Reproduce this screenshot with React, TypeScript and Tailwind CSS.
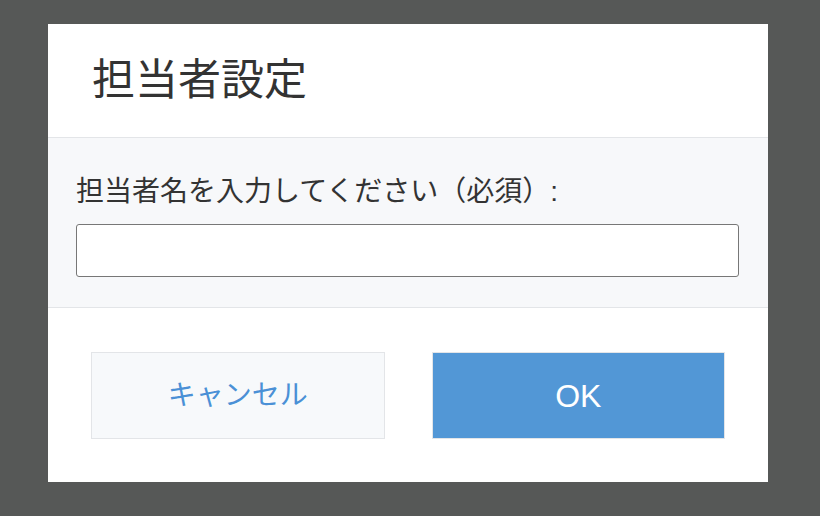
export default function App() {
  const jp = { fontFamily: '"Liberation Sans", "Noto Sans CJK JP", sans-serif' };
  return (
    <div className="w-full h-[516px] bg-[#565857] pt-[24px] pl-[48px]" style={jp}>
      <div className="w-[720px] h-[458px] bg-white flex flex-col">
        <div className="h-[114px] border-b border-[#e3e5e8] flex items-center pl-[44px]">
          <h1 className="text-[43px] leading-none text-[#333333]">担当者設定</h1>
        </div>
        <div className="h-[170px] bg-[#f7f8fa] border-b border-[#e3e5e8] px-[28px] pt-[35px]">
          <label className="block text-[28px] leading-[38px] text-[#333333]">
            担当者名を入力してください（必須）:
          </label>
          <input
            type="text"
            className="mt-[13px] w-[663px] h-[53px] bg-white border border-[#777777] rounded-[3px] outline-none px-3"
          />
        </div>
        <div className="flex-1 flex items-center gap-[47px] px-[43px] pt-[1px]">
          <button className="flex-1 h-[87px] bg-[#f7f9fb] border border-[#e3e5e8] text-[#4a90d6] text-[28px]">
            キャンセル
          </button>
          <button className="flex-1 h-[87px] bg-[#5297d6] border border-[#e3e5e8] text-white text-[32px]">
            OK
          </button>
        </div>
      </div>
    </div>
  );
}
